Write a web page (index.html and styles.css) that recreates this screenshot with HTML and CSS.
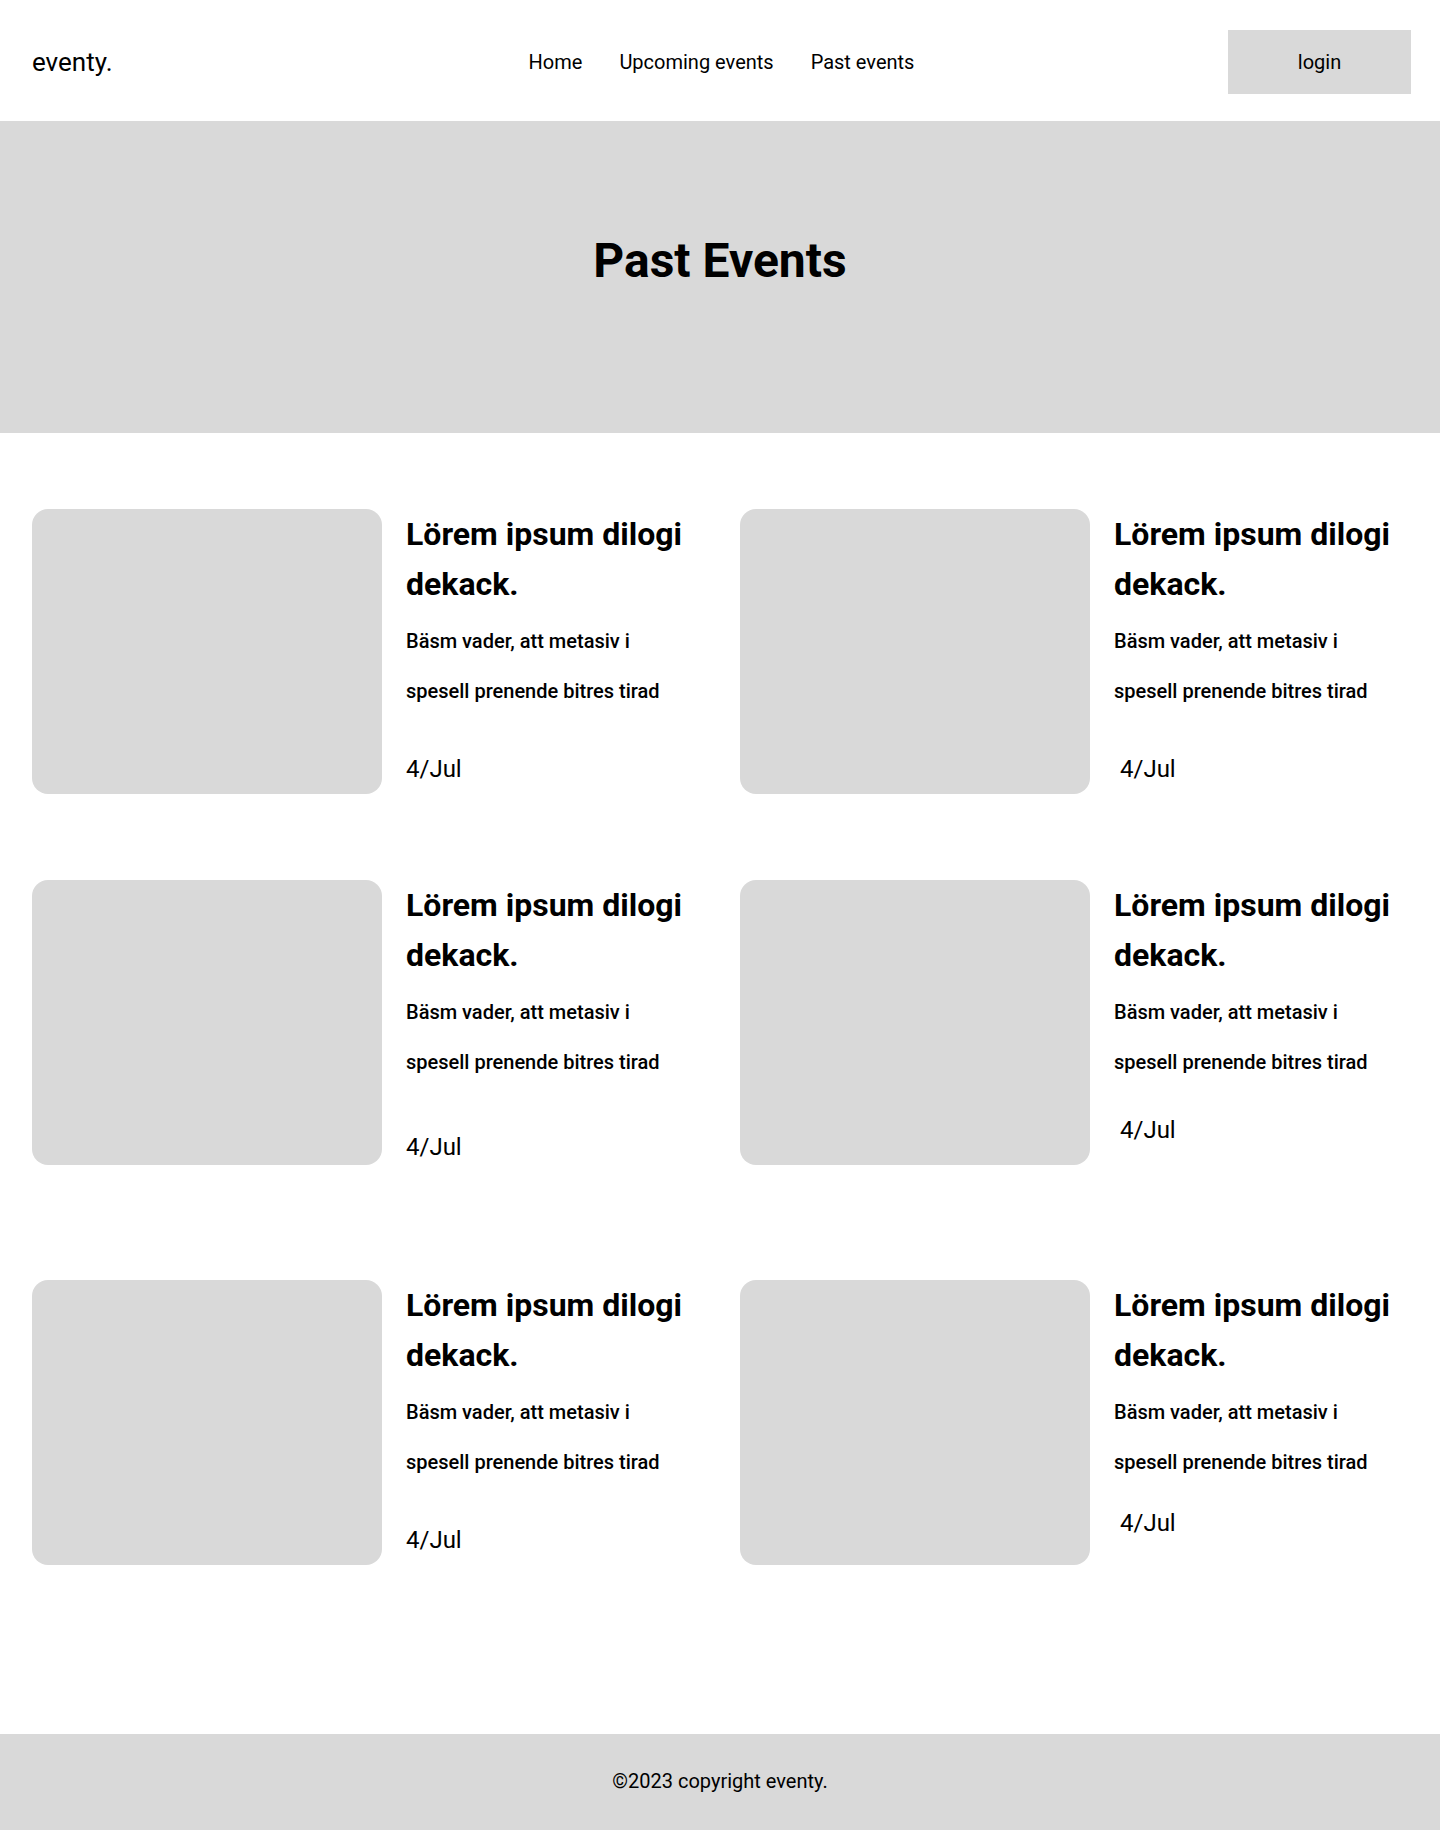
FILE: index.html
```html
<!DOCTYPE html>
<html lang="en">
<head>
<meta charset="utf-8">
<title>eventy. – Past Events</title>
<link rel="stylesheet" href="styles.css">
</head>
<body>
<header class="site-header">
  <a class="logo" href="#">eventy.</a>
  <nav class="main-nav">
    <a href="#">Home</a>
    <a href="#">Upcoming events</a>
    <a href="#">Past events</a>
  </nav>
  <div class="header-actions">
    <button class="login-btn" type="button">login</button>
  </div>
</header>

<section class="hero">
  <h1 class="hero-title">Past Events</h1>
</section>

<main class="events">
  <article class="card">
    <div class="card-image"></div>
    <div class="card-body">
      <h2 class="card-title">Lörem ipsum dilogi dekack.</h2>
      <p class="card-text">Bäsm vader, att metasiv i<br>spesell prenende bitres tirad</p>
      <p class="card-date">4/Jul</p>
    </div>
  </article>
  <article class="card">
    <div class="card-image"></div>
    <div class="card-body">
      <h2 class="card-title">Lörem ipsum dilogi dekack.</h2>
      <p class="card-text">Bäsm vader, att metasiv i<br>spesell prenende bitres tirad</p>
      <p class="card-date card-date--indent">4/Jul</p>
    </div>
  </article>

  <article class="card">
    <div class="card-image"></div>
    <div class="card-body">
      <h2 class="card-title">Lörem ipsum dilogi dekack.</h2>
      <p class="card-text">Bäsm vader, att metasiv i<br>spesell prenende bitres tirad</p>
      <p class="card-date card-date--low">4/Jul</p>
    </div>
  </article>
  <article class="card">
    <div class="card-image"></div>
    <div class="card-body">
      <h2 class="card-title">Lörem ipsum dilogi dekack.</h2>
      <p class="card-text">Bäsm vader, att metasiv i<br>spesell prenende bitres tirad</p>
      <p class="card-date card-date--indent card-date--high">4/Jul</p>
    </div>
  </article>

  <article class="card card--spaced">
    <div class="card-image"></div>
    <div class="card-body">
      <h2 class="card-title">Lörem ipsum dilogi dekack.</h2>
      <p class="card-text">Bäsm vader, att metasiv i<br>spesell prenende bitres tirad</p>
      <p class="card-date">4/Jul</p>
    </div>
  </article>
  <article class="card card--spaced">
    <div class="card-image"></div>
    <div class="card-body">
      <h2 class="card-title">Lörem ipsum dilogi dekack.</h2>
      <p class="card-text">Bäsm vader, att metasiv i<br>spesell prenende bitres tirad</p>
      <p class="card-date card-date--indent card-date--higher">4/Jul</p>
    </div>
  </article>
</main>

<footer class="site-footer">
  <p>©2023 copyright eventy.</p>
</footer>
</body>
</html>
```

FILE: styles.css
```css
* {
  box-sizing: border-box;
}

html, body {
  margin: 0;
  padding: 0;
}

body {
  font-family: Roboto, "Liberation Sans", Arial, sans-serif;
  color: #000;
  background: #fff;
}

a {
  color: inherit;
  text-decoration: none;
}

/* Header */
.site-header {
  height: 121px;
  padding: 30px 29px 27px 32px;
  display: grid;
  grid-template-columns: 1fr auto 1fr;
  align-items: center;
}

.logo {
  font-size: 26px;
  line-height: 1;
  justify-self: start;
}

.main-nav {
  display: flex;
  gap: 37px;
  font-size: 20px;
}

.header-actions {
  justify-self: end;
}

.login-btn {
  width: 183px;
  height: 64px;
  border: 0;
  border-radius: 0;
  background: #d9d9d9;
  font-family: inherit;
  font-size: 20px;
  color: #000;
  padding: 0;
  cursor: pointer;
}

/* Hero */
.hero {
  height: 312px;
  background: #d9d9d9;
  padding-top: 111px;
  text-align: center;
}

.hero-title {
  margin: 0;
  font-size: 48px;
  font-weight: 700;
  line-height: normal;
}

/* Events grid */
.events {
  display: grid;
  grid-template-columns: repeat(2, 658px);
  column-gap: 50px;
  row-gap: 86px;
  padding: 76px 32px 169px;
}

.card {
  display: flex;
  gap: 24px;
  align-items: flex-start;
}

.card--spaced {
  margin-top: 29px;
}

.card-image {
  flex: none;
  width: 350px;
  height: 285px;
  background: #d9d9d9;
  border-radius: 16px;
}

.card-body {
  width: 284px;
}

.card-title {
  margin: 0;
  font-size: 32px;
  font-weight: 700;
  line-height: 50px;
}

.card-text {
  margin: 7px 0 0;
  font-size: 20px;
  font-weight: 500;
  line-height: 50px;
}

.card-date {
  margin: 39px 0 0;
  font-size: 24px;
  font-weight: 400;
  line-height: normal;
}

.card-date--indent {
  padding-left: 6px;
}

.card-date--low {
  margin-top: 46px;
}

.card-date--high {
  margin-top: 29px;
}

.card-date--higher {
  margin-top: 22px;
}

/* Footer */
.site-footer {
  height: 96px;
  padding-bottom: 3px;
  background: #d9d9d9;
  display: flex;
  align-items: center;
  justify-content: center;
}

.site-footer p {
  margin: 0;
  font-size: 20px;
}
```
